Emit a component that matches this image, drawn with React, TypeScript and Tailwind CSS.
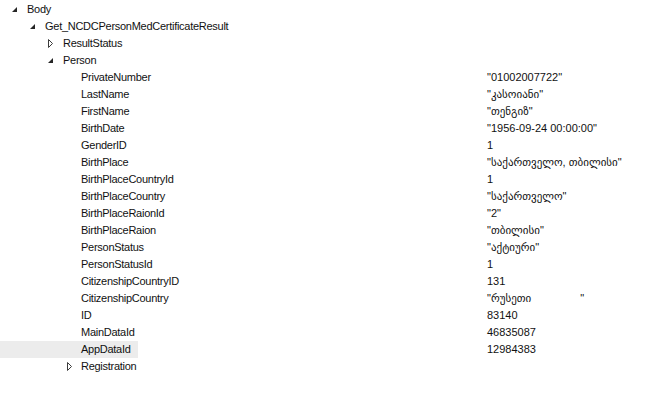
import React from "react";

type Row = {
  name: string;
  value?: string;
  level: number;
  toggle?: "open" | "closed";
  selected?: boolean;
};

const rows: Row[] = [
  { name: "Body", level: 0, toggle: "open" },
  { name: "Get_NCDCPersonMedCertificateResult", level: 1, toggle: "open" },
  { name: "ResultStatus", level: 2, toggle: "closed" },
  { name: "Person", level: 2, toggle: "open" },
  { name: "PrivateNumber", level: 3, value: '"01002007722"' },
  { name: "LastName", level: 3, value: '"კასოიანი"' },
  { name: "FirstName", level: 3, value: '"თენგიზ"' },
  { name: "BirthDate", level: 3, value: '"1956-09-24 00:00:00"' },
  { name: "GenderID", level: 3, value: "1" },
  { name: "BirthPlace", level: 3, value: '"საქართველო, თბილისი"' },
  { name: "BirthPlaceCountryId", level: 3, value: "1" },
  { name: "BirthPlaceCountry", level: 3, value: '"საქართველო"' },
  { name: "BirthPlaceRaionId", level: 3, value: '"2"' },
  { name: "BirthPlaceRaion", level: 3, value: '"თბილისი"' },
  { name: "PersonStatus", level: 3, value: '"აქტიური"' },
  { name: "PersonStatusId", level: 3, value: "1" },
  { name: "CitizenshipCountryID", level: 3, value: "131" },
  { name: "CitizenshipCountry", level: 3, value: '"რუსეთი                "' },
  { name: "ID", level: 3, value: "83140" },
  { name: "MainDataId", level: 3, value: "46835087" },
  { name: "AppDataId", level: 3, value: "12984383", selected: true },
  { name: "Registration", level: 3, toggle: "closed" },
];

const indent = ["pl-[27px]", "pl-[45px]", "pl-[63px]", "pl-[81px]"];
const arrowPos = ["left-[11px]", "left-[29px]", "left-[47px]", "left-[66px]"];

function Toggle({ kind }: { kind: "open" | "closed" }) {
  if (kind === "open") {
    return (
      <svg width="7" height="7" viewBox="0 0 7 7" className="block">
        <path d="M6 1 L6 6 L1 6 Z" fill="#262626" />
      </svg>
    );
  }
  return (
    <svg width="7" height="9" viewBox="0 0 7 9" className="block">
      <path d="M1.5 0.5 L5.5 4.5 L1.5 8.5 Z" fill="none" stroke="#3c3c3c" strokeWidth="1" />
    </svg>
  );
}

export default function App() {
  return (
    <div className="w-[661px] h-[401px] pt-[1px] bg-white overflow-hidden font-['Liberation_Sans','DejaVu_Sans',sans-serif] text-[11px] text-[#111]">
      {rows.map((r, i) => (
        <div key={i} className="flex h-[17px] items-center">
          <div className="relative w-[487px] shrink-0 h-full flex items-center tracking-[-0.27px]">
            {r.toggle && (
              <div className={`absolute top-0 h-full flex items-center ${arrowPos[r.level]}`}>
                <Toggle kind={r.toggle} />
              </div>
            )}
            {r.selected ? (
              <div className={`h-full w-[138px] bg-[#ececec] flex items-center ${indent[r.level]}`}>
                {r.name}
              </div>
            ) : (
              <div className={`whitespace-nowrap ${indent[r.level]}`}>{r.name}</div>
            )}
          </div>
          {r.value && <div className="whitespace-pre">{r.value}</div>}
        </div>
      ))}
    </div>
  );
}
